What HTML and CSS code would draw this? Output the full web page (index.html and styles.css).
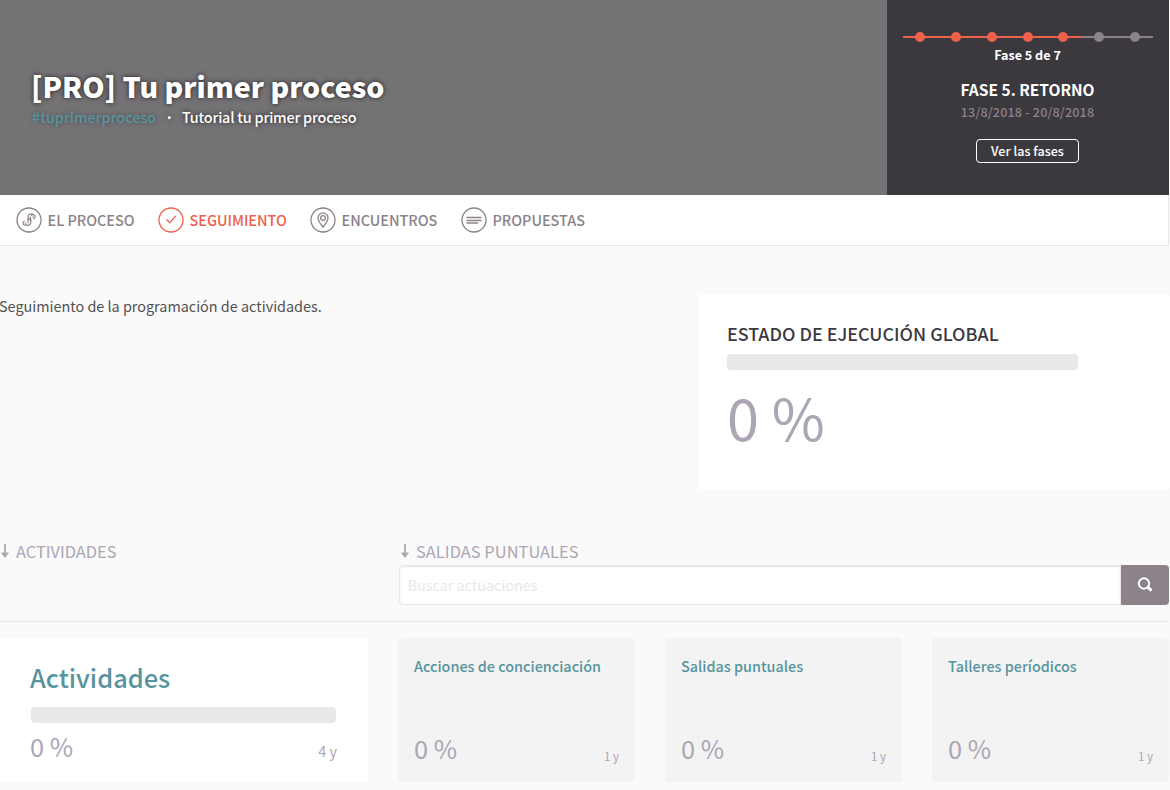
FILE: index.html
```html
<!DOCTYPE html>
<html lang="es">
<head>
<meta charset="utf-8">
<title>Tu primer proceso</title>
<link rel="stylesheet" href="styles.css">
</head>
<body>
<div class="page">
  <header class="hero">
    <div class="hero-main">
      <h1 class="hero-title"><span>[PRO] Tu primer proceso</span></h1>
      <p class="hero-sub"><a class="hashtag">#tuprimerproceso</a><span class="dot">·</span><span class="tagline">Tutorial tu primer proceso</span></p>
    </div>
    <aside class="phase">
      <svg class="phase-track" width="250" height="10" viewBox="0 0 250 10">
        <path d="M178 5H250" stroke="#8c8289" stroke-width="2"/>
        <path d="M0 5H178" stroke="#ef604d" stroke-width="2"/>
        <g fill="#ef604d"><circle cx="17" cy="5" r="5"/><circle cx="53" cy="5" r="5"/><circle cx="89" cy="5" r="5"/><circle cx="125" cy="5" r="5"/><circle cx="160" cy="5" r="5"/></g>
        <g fill="#8c8289"><circle cx="196" cy="5" r="5"/><circle cx="232" cy="5" r="5"/></g>
      </svg>
      <span class="phase-count">Fase 5 de 7</span>
      <strong class="phase-name">FASE 5. RETORNO</strong>
      <span class="phase-dates">13/8/2018 - 20/8/2018</span>
      <a class="phase-button"><span>Ver las fases</span></a>
    </aside>
  </header>

  <nav class="tabs">
    <a class="tab tab-process"><svg class="tab-icon" viewBox="0 0 26 26"><circle cx="13" cy="13" r="12"/><g stroke-width="1.200"><path d="M17.200 11.800a2.100 2.100 0 1 0-2.100-3M16.300 9.800h1.200M17 7.200c-3-.8-5.200.6-5 2.900.2 2 2.900 2.200 2.900 4.700 0 2.300-1.600 3.700-4 3.900M8.800 14a2.100 2.100 0 1 0 2.200 3M8.800 16.200h1.300M14.300 9.500c-.3 1.800 1 2.200.6 4.500M11.900 11.500c-.5 1.900.7 2.700 0 4.800"/></g></svg><span>EL PROCESO</span></a>
    <a class="tab tab-follow active"><svg class="tab-icon" viewBox="0 0 26 26"><circle cx="13" cy="13" r="12"/><path d="M8.500 12.500l3.300 3.300 6-7"/></svg><span>SEGUIMIENTO</span></a>
    <a class="tab tab-meet"><svg class="tab-icon" viewBox="0 0 26 26"><circle cx="13" cy="13" r="12"/><path d="M13 20.200c-1.300-2.200-5-6-5-9.300a5 5 0 0 1 10 0c0 3.300-3.700 7.100-5 9.300z"/><circle cx="13" cy="11" r="2.300"/></svg><span>ENCUENTROS</span></a>
    <a class="tab tab-prop"><svg class="tab-icon" viewBox="0 0 26 26"><circle cx="13" cy="13" r="12"/><path d="M5.500 10.500H20.500M5.500 13.500H20.500M5.500 16H17"/></svg><span>PROPUESTAS</span></a>
  </nav>

  <main>
    <section class="overview">
      <p class="intro">Seguimiento de la programación de actividades.</p>
      <div class="global">
        <h2 class="global-title"><span>ESTADO DE EJECUCIÓN GLOBAL</span></h2>
        <div class="bar global-bar"></div>
        <div class="global-value">0 %</div>
      </div>
    </section>

    <section class="filters">
      <div class="level"><svg class="arrow" viewBox="0 0 8 14"><path d="M4 0V10" stroke="#aca5b4" stroke-width="1.700"/><path d="M0 8.500h8L4 14z" fill="#aca5b4"/></svg><span class="level-one">ACTIVIDADES</span></div>
      <div class="search-column">
        <div class="level level-right"><svg class="arrow" viewBox="0 0 8 14"><path d="M4 0V10" stroke="#aca5b4" stroke-width="1.700"/><path d="M0 8.500h8L4 14z" fill="#aca5b4"/></svg><span class="level-two">SALIDAS PUNTUALES</span></div>
        <div class="search">
          <div class="search-field"><span>Buscar actuaciones</span></div>
          <div class="search-button"><svg width="16" height="16" viewBox="0 0 16 16" fill="none" stroke="#fff"><circle cx="7" cy="6.500" r="5.200" stroke-width="1.900"/><path d="M11 10.300l2.500 2.400" stroke-width="3.200" stroke-linecap="round"/></svg></div>
        </div>
      </div>
    </section>

    <section class="results">
      <article class="category">
        <h3 class="category-title"><span>Actividades</span></h3>
        <div class="bar"></div>
        <div class="category-foot"><span class="percent">0 %</span><span class="count">4 y</span></div>
      </article>
      <div class="cards">
        <article class="card"><h4 class="card-title"><span>Acciones de concienciación</span></h4><div class="card-foot"><span class="percent">0 %</span><span class="card-count">1 y</span></div></article>
        <article class="card"><h4 class="card-title"><span>Salidas puntuales</span></h4><div class="card-foot"><span class="percent">0 %</span><span class="card-count">1 y</span></div></article>
        <article class="card"><h4 class="card-title"><span>Talleres períodicos</span></h4><div class="card-foot"><span class="percent">0 %</span><span class="card-count">1 y</span></div></article>
      </div>
    </section>
  </main>
</div>
</body>
</html>
```

FILE: styles.css
```css
* { box-sizing: border-box; }
html { background: #fafafa; }
body {
  margin: 0;
  font-family: "Noto Sans CJK JP", "Noto Sans", sans-serif;
  color: #3c393f;
  overflow: hidden;
}
h1, h2, h3, h4, p { margin: 0; }
.page { width: 1169px; height: 790px; overflow: hidden; white-space: nowrap; }

.hero { display: flex; height: 195px; color: #fff; }
.hero-main { flex: 1; padding: 67px 0 0 31px; background: #757276; text-shadow: 0 0 5px rgba(0, 0, 0, .75); }
.hero-title { font-size: 28.500px; line-height: 38px; font-weight: 900; }
.hero-sub { display: flex; font-size: 14.400px; line-height: 23px; font-weight: 500; }
.hashtag { width: 134px; margin-left: 1px; color: #57949e; text-shadow: 0 0 5px rgba(0, 0, 0, .35); }
.dot { width: 16px; margin-left: -1px; padding-right: 1px; box-sizing: content-box; font-weight: 700; }
.tagline { letter-spacing: -.2px; }

.phase { display: flex; flex-direction: column; align-items: center; width: 282px; padding: 32px 1px 0 0; background: #3b393e; }
.phase-track { margin-left: 1px; }
.phase-count { margin-top: 4px; font-size: 12.600px; line-height: 18px; font-weight: 600; }
.phase-name { margin-top: 14px; font-size: 15.500px; line-height: 22px; font-weight: 600; }
.phase-dates { margin-top: 3px; font-size: 12.600px; line-height: 18px; font-weight: 500; letter-spacing: .15px; color: #8c8289; }
.phase-button { display: flex; justify-content: center; width: 103px; height: 24px; margin-top: 18px; border: 1px solid #fff; border-radius: 4px; font-size: 12.600px; line-height: 22px; font-weight: 500; }

.tabs { display: flex; align-items: center; height: 51px; padding-left: 15px; background: #fff; border: solid #e8e8e8; border-width: 0 1px 1px 0; color: #8c8289; font-size: 14.400px; line-height: 22px; font-weight: 500; }
.tab { display: flex; align-items: center; gap: 6px; }
.tab-process { width: 142px; }
.tab-follow { width: 152px; }
.tab-meet { width: 151px; }
.tab-icon { width: 27px; height: 26px; padding-left: 1px; margin-right: -1px; fill: none; stroke: currentColor; stroke-width: 1.300; }
.tab span { padding-left: .5px; }
.active { color: #ef604d; }

.overview { display: flex; justify-content: space-between; padding-top: 48px; }
.intro { margin-left: -1px; font-size: 14.400px; line-height: 24px; font-weight: 400; color: #515151; }
.global { width: 471px; height: 196px; padding: 27px 28px 0; border-left: 1px solid #fafafa; background: #fff; }
.global-title { font-size: 17.900px; line-height: 25px; font-weight: 500; }
.bar { height: 16px; border-radius: 4px; background: #e8e8e8; }
.global-bar { width: 351px; margin-top: 8px; }
.global-value { margin-top: 10px; font-size: 57.600px; line-height: 72px; color: #aca5b4; }

.filters { display: grid; grid-template-columns: 399px 770px; height: 132px; padding-top: 49px; border-bottom: 1px solid #e8e8e8; }
.level { display: flex; align-items: center; gap: 7px; height: 26px; padding: 0 0 2px 1px; color: #aca5b4; font-size: 16.400px; line-height: 24px; }
.level-right { padding-left: 2px; letter-spacing: .05px; }
.arrow { width: 8px; height: 14px; }
.search { display: flex; height: 40px; }
.search-field { flex: 1; padding-left: 7.500px; border: 1px solid #e8e8e8; border-radius: 4px 0 0 4px; background: #fff; box-shadow: inset 0 1px 2px rgba(10, 10, 10, .1); color: #e8e8e8; font-size: 14.400px; line-height: 37px; }
.search-button { display: flex; width: 48px; align-items: center; justify-content: center; border-radius: 0 4px 4px 0; background: #8c8289; }

.results { display: flex; gap: 30px; padding-top: 16px; }
.category { width: 368px; height: 144px; padding: 20px 31px 0 31px; background: #fff; }
.category-title { margin: 0 0 10px -1px; font-size: 25.400px; line-height: 39px; font-weight: 500; color: #57949e; }
.category .bar { width: 305px; }
.category-foot, .card-foot { display: flex; justify-content: space-between; align-items: baseline; color: #aca5b4; }
.category-foot { margin: 7px 0 0 -1px; }
.percent { font-size: 25.400px; line-height: 32px; }
.count { font-size: 14.400px; line-height: 20px; }
.cards { display: grid; flex: 1; grid-template-columns: repeat(3, 1fr); gap: 30px; }
.card { display: flex; flex-direction: column; justify-content: space-between; height: 144px; padding: 16px 16px 17px; border-radius: 4px; background: #f3f3f3; }
.card-title { font-size: 14.400px; line-height: 23px; font-weight: 500; color: #57949e; }
.card-foot { align-items: flex-end; }
.card-foot .percent { margin-bottom: 1px; }
.card-count { font-size: 11.500px; line-height: 17px; }
```
